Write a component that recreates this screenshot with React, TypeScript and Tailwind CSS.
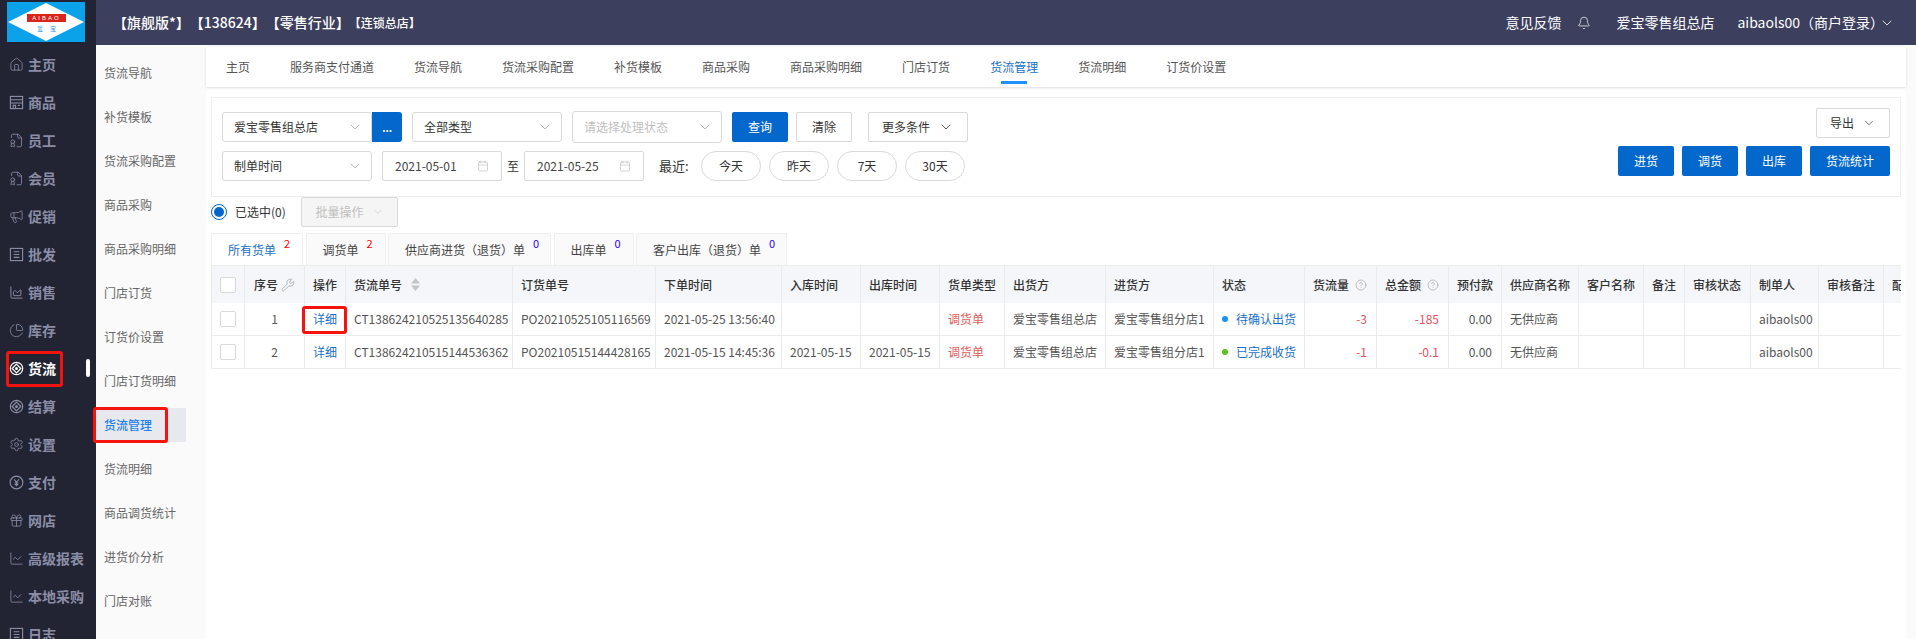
import { Bell, ChevronDown, Calendar, Wrench, CircleHelp, Home, FileBadge, Megaphone, ChartArea, ChartPie, Settings, Gift, ChartLine } from "lucide-react";
import type { ReactNode } from "react";

// round cog used by the 货流 and 结算 menu entries
function FlowIcon({ size = 15 }: { size?: number }) {
  return (
    <svg width={size} height={size} viewBox="0 0 16 16" fill="none" stroke="currentColor" strokeWidth="1.3" className="shrink-0">
      <circle cx="8" cy="8" r="6.6" />
      <path d="M8 3.4 12.6 8 8 12.6 3.4 8Z" />
      <circle cx="8" cy="8" r="1.6" fill="currentColor" stroke="none" />
    </svg>
  );
}

function ShopIcon({ size = 15 }: { size?: number }) {
  return (
    <svg width={size} height={size} viewBox="0 0 16 16" fill="none" stroke="currentColor" strokeWidth="1.2" className="shrink-0">
      <rect x="1.5" y="1.5" width="13" height="13" />
      <path d="M1.5 5h13M1.5 8.5h13" />
      <path d="M4.5 14.5v-3.5h2.5v3.5M9.5 11h2" />
    </svg>
  );
}

function ListIcon({ size = 15 }: { size?: number }) {
  return (
    <svg width={size} height={size} viewBox="0 0 16 16" fill="none" stroke="currentColor" strokeWidth="1.2" className="shrink-0">
      <rect x="1.5" y="1.5" width="13" height="13" />
      <path d="M5 5h6M5 8h6M5 11h6" />
    </svg>
  );
}

function YuanIcon({ size = 15 }: { size?: number }) {
  return (
    <svg width={size} height={size} viewBox="0 0 16 16" fill="none" stroke="currentColor" strokeWidth="1.2" className="shrink-0">
      <circle cx="8" cy="8" r="6.8" />
      <path d="M5.5 4.5 8 8l2.5-3.5M8 8v4M6 8.5h4M6 10.2h4" />
    </svg>
  );
}

const mainNav = [
  { label: "主页", icon: <Home size={15} strokeWidth={1.3} className="shrink-0" /> },
  { label: "商品", icon: <ShopIcon /> },
  { label: "员工", icon: <FileBadge size={15} strokeWidth={1.3} className="shrink-0" /> },
  { label: "会员", icon: <FileBadge size={15} strokeWidth={1.3} className="shrink-0" /> },
  { label: "促销", icon: <Megaphone size={15} strokeWidth={1.3} className="shrink-0" /> },
  { label: "批发", icon: <ListIcon /> },
  { label: "销售", icon: <ChartArea size={15} strokeWidth={1.5} className="shrink-0" /> },
  { label: "库存", icon: <ChartPie size={15} strokeWidth={1.3} className="shrink-0" /> },
  { label: "货流", icon: <FlowIcon />, active: true },
  { label: "结算", icon: <FlowIcon /> },
  { label: "设置", icon: <Settings size={15} strokeWidth={1.3} className="shrink-0" /> },
  { label: "支付", icon: <YuanIcon /> },
  { label: "网店", icon: <Gift size={15} strokeWidth={1.3} className="shrink-0" /> },
  { label: "高级报表", icon: <ChartLine size={15} strokeWidth={1.3} className="shrink-0" /> },
  { label: "本地采购", icon: <ChartLine size={15} strokeWidth={1.3} className="shrink-0" /> },
  { label: "日志", icon: <ListIcon /> },
];

const subNav = ["货流导航", "补货模板", "货流采购配置", "商品采购", "商品采购明细", "门店订货", "订货价设置", "门店订货明细", "货流管理", "货流明细", "商品调货统计", "进货价分析", "门店对账"];

const tabs = ["主页", "服务商支付通道", "货流导航", "货流采购配置", "补货模板", "商品采购", "商品采购明细", "门店订货", "货流管理", "货流明细", "订货价设置"];

const billTabs = [
  { label: "所有货单", count: 2, w: "w-[92px]" },
  { label: "调货单", count: 2, w: "w-[80px]" },
  { label: "供应商进货（退货）单", count: 0, w: "w-[163px]" },
  { label: "出库单", count: 0, w: "w-[80px]" },
  { label: "客户出库（退货）单", count: 0, w: "w-[151px]" },
];

const columns = [
  { label: "", w: "w-[33px]" },
  { label: "序号", w: "w-[60px]" },
  { label: "操作", w: "w-[41px]" },
  { label: "货流单号", w: "w-[167px]" },
  { label: "订货单号", w: "w-[143px]" },
  { label: "下单时间", w: "w-[126px]" },
  { label: "入库时间", w: "w-[79px]" },
  { label: "出库时间", w: "w-[79px]" },
  { label: "货单类型", w: "w-[65px]" },
  { label: "出货方", w: "w-[101px]" },
  { label: "进货方", w: "w-[108px]" },
  { label: "状态", w: "w-[91px]" },
  { label: "货流量", w: "w-[72px]" },
  { label: "总金额", w: "w-[72px]" },
  { label: "预付款", w: "w-[53px]" },
  { label: "供应商名称", w: "w-[77px]" },
  { label: "客户名称", w: "w-[65px]" },
  { label: "备注", w: "w-[41px]" },
  { label: "审核状态", w: "w-[66px]" },
  { label: "制单人", w: "w-[68px]" },
  { label: "审核备注", w: "w-[65px]" },
  { label: "配", w: "w-[19px]" },
];

const rows = [
  ["", "1", "详细", "CT138624210525135640285", "PO20210525105116569", "2021-05-25 13:56:40", "", "", "调货单", "爱宝零售组总店", "爱宝零售组分店1", "待确认出货", "-3", "-185", "0.00", "无供应商", "", "", "", "aibaols00", "", ""],
  ["", "2", "详细", "CT138624210515144536362", "PO20210515144428165", "2021-05-15 14:45:36", "2021-05-15", "2021-05-15", "调货单", "爱宝零售组总店", "爱宝零售组分店1", "已完成收货", "-1", "-0.1", "0.00", "无供应商", "", "", "", "aibaols00", "", ""],
];

function Logo() {
  return (
    <svg width="78" height="40" viewBox="0 0 78 40" className="block">
      <rect width="78" height="40" fill="#0ba2ea" />
      <polygon points="1,20 39,1 77,20 39,39" fill="#ffffff" />
      <rect x="20" y="12" width="39" height="8" fill="#d9261c" />
      <text x="39.5" y="18.3" textAnchor="middle" fontSize="6" letterSpacing="2" fill="#fff" fontFamily="Liberation Sans">AIBAO</text>
      <text x="33" y="28.5" textAnchor="middle" fontSize="6" fill="#2a9be0" fontFamily="Noto Sans CJK SC">爱</text>
      <text x="46" y="28.5" textAnchor="middle" fontSize="6" fill="#2a9be0" fontFamily="Noto Sans CJK SC">宝</text>
    </svg>
  );
}

function Sidebar() {
  return (
    <aside className="w-[96px] shrink-0 bg-[#222433] h-[639px] overflow-hidden relative">
      <div className="pl-[7px] pt-[2px] h-[45px]"><Logo /></div>
      <div className="flex flex-col">
        {mainNav.map((n) => (
          <div key={n.label} className={`h-[38px] flex items-center pl-[9px] gap-[4px] text-[14px] font-bold whitespace-nowrap ${n.active ? "text-white" : "text-[#8b8da6]"}`}>
            {n.icon}
            <span>{n.label}</span>
            {n.active && <span className="absolute left-[86px] w-[4px] h-[18px] rounded-sm bg-white" />}
          </div>
        ))}
      </div>
      <div className="absolute left-[6px] top-[351px] w-[57px] h-[36px] border-[3px] border-[#f5130d] rounded-[3px]" />
    </aside>
  );
}

function SubNav() {
  return (
    <nav className="w-[90px] shrink-0 h-[594px] relative">
      <div className="flex flex-col pt-[6px]">
        {subNav.map((s) => (
          <div key={s} className="h-[44px] flex items-center">
            <span className={`w-full h-[34px] flex items-center pl-[8px] text-[12px] whitespace-nowrap ${s === "货流管理" ? "bg-[#e8e9ef] text-[#1e80f0] font-medium" : "text-[#666]"}`}>{s}</span>
          </div>
        ))}
      </div>
      <div className="absolute -left-[3px] top-[362px] w-[75px] h-[36px] border-[3px] border-[#f5130d] rounded-[3px]" />
    </nav>
  );
}

function Select({ text, placeholder, tall }: { text: string; placeholder?: boolean; tall?: boolean }) {
  return (
    <div className={`w-[150px] ${tall ? "h-[32px]" : "h-[30px]"} bg-white border border-[#d9d9d9] rounded-[3px] flex items-center justify-between pl-[11px] pr-[8px] text-[12px] ${placeholder ? "text-[#bfbfbf]" : "text-[#333]"}`}>
      <span>{text}</span>
      <ChevronDown size={16} strokeWidth={1} className="text-[#999]" />
    </div>
  );
}

function DateBox({ text }: { text: string }) {
  return (
    <div className="w-[120px] h-[30px] bg-white border border-[#d9d9d9] rounded-[2px] flex items-center justify-between pl-[12px] pr-[12px] text-[12px] text-[#444]">
      <span>{text}</span>
      <Calendar size={12} strokeWidth={1} className="text-[#aaa]" />
    </div>
  );
}

function Btn({ children, w }: { children: ReactNode; w: string }) {
  return <div className={`${w} h-[30px] bg-[#0367cc] rounded-[2px] text-white text-[12px] flex items-center justify-center`}>{children}</div>;
}

function Outline({ children, w }: { children: ReactNode; w: string }) {
  return <div className={`${w} h-[30px] bg-white border border-[#d9d9d9] rounded-[2px] text-[#333] text-[12px] flex items-center justify-center gap-[8px]`}>{children}</div>;
}

function Pill({ children }: { children: ReactNode }) {
  return <div className="w-[60px] h-[30px] bg-white border border-[#d9d9d9] rounded-full text-[#333] text-[12px] flex items-center justify-center">{children}</div>;
}

function FilterPanel() {
  return (
    <section className="h-[100px] border border-[#eeeeee] bg-white pt-[14px] pl-[10px] pr-[10px] flex justify-between">
      <div className="flex flex-col gap-[9px]">
        <div className="flex items-center h-[30px]">
          <Select text="爱宝零售组总店" />
          <div className="w-[30px] h-[30px] bg-[#0367cc] rounded-r-[3px] text-white text-[10px] font-bold flex items-center justify-center">...</div>
          <div className="w-[10px]" />
          <Select text="全部类型" />
          <div className="w-[10px]" />
          <Select text="请选择处理状态" placeholder tall />
          <div className="w-[10px]" />
          <Btn w="w-[56px]">查询</Btn>
          <div className="w-[8px]" />
          <Outline w="w-[56px]">清除</Outline>
          <div className="w-[16px]" />
          <Outline w="w-[100px]">更多条件<ChevronDown size={16} strokeWidth={1.2} /></Outline>
        </div>
        <div className="flex items-center">
          <Select text="制单时间" />
          <div className="w-[10px]" />
          <DateBox text="2021-05-01" />
          <span className="w-[22px] text-center text-[12px] text-[#333]">至</span>
          <DateBox text="2021-05-25" />
          <span className="ml-[15px] w-[42px] text-[13px] text-[#333]">最近:</span>
          <div className="flex gap-[8px]">
            <Pill>今天</Pill>
            <Pill>昨天</Pill>
            <Pill>7天</Pill>
            <Pill>30天</Pill>
          </div>
        </div>
      </div>
      <div className="flex flex-col items-end gap-[8px] -mt-[4px]">
        <Outline w="w-[74px]">导出<ChevronDown size={14} strokeWidth={1.2} /></Outline>
        <div className="flex gap-[8px]">
          <Btn w="w-[56px]">进货</Btn>
          <Btn w="w-[56px]">调货</Btn>
          <Btn w="w-[56px]">出库</Btn>
          <Btn w="w-[80px]">货流统计</Btn>
        </div>
      </div>
    </section>
  );
}

function BatchBar() {
  return (
    <div className="h-[30px] flex items-center text-[12px] text-[#333]">
      <span className="w-[16px] h-[16px] rounded-full border border-[#0367cc] flex items-center justify-center">
        <span className="w-[10px] h-[10px] rounded-full bg-[#0367cc]" />
      </span>
      <span className="ml-[8px] w-[66px]">已选中(0)</span>
      <div className="w-[97px] h-[30px] bg-[#f5f5f5] border border-[#d9d9d9] rounded-[2px] flex items-center justify-center gap-[8px] text-[#bfbfbf]">
        批量操作<ChevronDown size={12} strokeWidth={1.2} />
      </div>
    </div>
  );
}

function BillTabs() {
  return (
    <div className="flex gap-[2.5px] h-[32px] mt-[6px]">
      {billTabs.map((t, i) => (
        <div key={t.label} className={`${t.w} border border-b-0 border-[#eeeeee] rounded-t-[2px] flex pl-[16px] text-[12px] whitespace-nowrap ${i === 0 ? "bg-white text-[#1a6fc9]" : "bg-[#fafafa] text-[#444]"}`}>
          <span className="pt-[7px] leading-[18px]">{t.label}</span>
          <span className={`ml-[8px] pt-[2px] text-[11px] leading-[14px] ${t.count ? "text-[#f00]" : "text-[#2a00ff]"}`}>{t.count}</span>
        </div>
      ))}
    </div>
  );
}

function SortCaret() {
  return (
    <svg width="9" height="13" viewBox="0 0 9 13" fill="#c4c4c4" className="ml-[9px]">
      <path d="M4.5 0 9 5.5H0Z" />
      <path d="M4.5 13 0 7.5h9Z" />
    </svg>
  );
}

function Cell({ col, value, row }: { col: number; value: string; row: number }) {
  const w = columns[col].w;
  const base = `${w} shrink-0 border-r border-[#ebebeb] h-full flex items-center text-[12px] whitespace-nowrap overflow-hidden`;
  if (col === 0)
    return (
      <div className={`${base} justify-center`}>
        <span className="w-[16px] h-[16px] border border-[#d9d9d9] rounded-[2px] bg-white" />
      </div>
    );
  if (col === 1) return <div className={`${base} justify-center text-[#555]`}>{value}</div>;
  if (col === 2) return <div className={`${base} justify-center text-[#1a6fc9]`}>{value}</div>;
  if (col === 8) return <div className={`${base} pl-[8px] text-[#e0605c]`}>{value}</div>;
  if (col === 11)
    return (
      <div className={`${base} pl-[8px] gap-[8px] text-[#1a6fc9]`}>
        <span className={`w-[6px] h-[6px] rounded-full ${row === 0 ? "bg-[#1890ff]" : "bg-[#52c41a]"}`} />
        {value}
      </div>
    );
  if (col === 12 || col === 13) return <div className={`${base} justify-end pr-[9px] text-[#e8505b]`}>{value}</div>;
  if (col === 14) return <div className={`${base} justify-end pr-[9px] text-[#555]`}>{value}</div>;
  return <div className={`${base} pl-[8px] text-[#555]`}>{value}</div>;
}

function BillTable() {
  return (
    <div className="overflow-hidden relative w-[1690px]">
      <div className="flex w-max h-[38px] bg-[#f4f6fa] border-t border-[#ebebeb] border-l">
        {columns.map((c, i) => (
          <div key={i} className={`${c.w} shrink-0 border-r border-[#ebebeb] flex items-center text-[12px] font-medium text-[#333] whitespace-nowrap overflow-hidden ${i < 3 ? "justify-center" : "pl-[8px]"}`}>
            {i === 0 && <span className="w-[16px] h-[16px] border border-[#d9d9d9] rounded-[2px] bg-white" />}
            {c.label}
            {i === 1 && <Wrench size={14} strokeWidth={1} className="ml-[3px] text-[#888]" />}
            {i === 3 && <SortCaret />}
            {(i === 12 || i === 13) && <CircleHelp size={12} strokeWidth={1} className="ml-[6px] text-[#888]" />}
          </div>
        ))}
      </div>
      {rows.map((r, ri) => (
        <div key={ri} className="flex w-max h-[33px] border-b border-l border-[#ebebeb] bg-white">
          {r.map((v, ci) => (
            <Cell key={ci} col={ci} value={v} row={ri} />
          ))}
        </div>
      ))}
      <div className="absolute left-[91px] top-[41px] w-[45px] h-[28px] border-[3px] border-[#f5130d] rounded-[3px]" />
    </div>
  );
}

export default function App() {
  return (
    <div className="font-['Noto_Sans_CJK_SC','Noto_Sans',sans-serif] flex w-[1916px] h-[639px] overflow-hidden bg-white">
      <Sidebar />
      <div className="flex-1 flex flex-col min-w-0">
        <header className="h-[45px] bg-[#3d3f5e] flex items-center justify-between text-white text-[14px] pl-[17px] pr-[21px]">
          <div className="flex items-center font-medium">
            <span>【旗舰版*】</span>
            <span>【138624】</span>
            <span>【零售行业】</span>
            <span className="text-[12px] -ml-[1px]">【连锁总店】</span>
          </div>
          <div className="flex items-center">
            <span>意见反馈</span>
            <Bell size={14} strokeWidth={1.2} className="ml-[16px]" />
            <span className="ml-[25px]">爱宝零售组总店</span>
            <span className="ml-[23px]">aibaols00（商户登录）</span>
            <ChevronDown size={16} strokeWidth={1.2} className="-ml-[5px]" />
          </div>
        </header>
        <div className="flex flex-1 min-h-0 bg-[#fafafa]">
          <SubNav />
          <main className="flex-1 min-w-0 pl-[20px] pr-[10px] pt-[2px]">
            <div className="bg-white h-full">
              <div className="h-[40px] shadow-sm flex items-center text-[12px] text-[#555]">
                {tabs.map((t) => (
                  <div key={t} className={`relative h-full flex items-center px-[20px] whitespace-nowrap ${t === "货流管理" ? "text-[#1a6fc9]" : ""}`}>
                    {t}
                    {t === "货流管理" && <span className="absolute bottom-[3px] left-1/2 -translate-x-1/2 w-[26px] h-[3px] bg-[#1e90ff]" />}
                  </div>
                ))}
              </div>
              <div className="px-[5px] pt-[10px]">
                <FilterPanel />
                <BatchBar />
                <BillTabs />
                <BillTable />
              </div>
            </div>
          </main>
        </div>
      </div>
    </div>
  );
}
